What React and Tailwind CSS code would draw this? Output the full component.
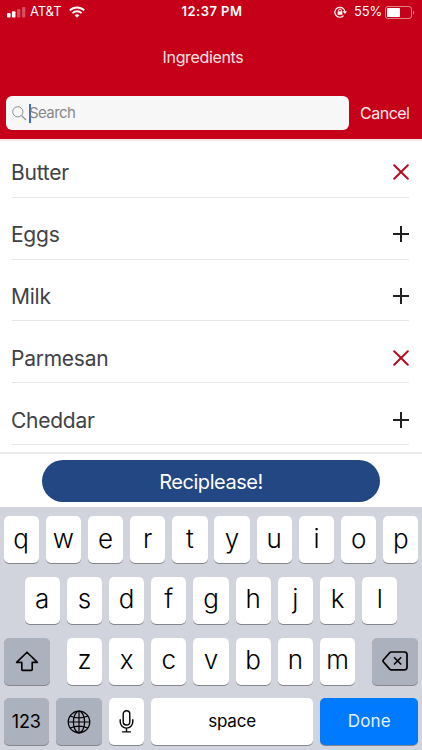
const ingredients = [
  { name: "Butter", selected: true },
  { name: "Eggs", selected: false },
  { name: "Milk", selected: false },
  { name: "Parmesan", selected: true },
  { name: "Cheddar", selected: false },
];

function StatusBar() {
  return (
    <div className="grid h-6 grid-cols-3 items-center pr-[7px] pl-[7px] text-[13px] text-white">
      <div className="flex items-center">
        <svg width="19" height="11" viewBox="0 0 19 11" fill="#fff">
          <rect x="0" y="6" width="3.6" height="4.6" rx="1" />
          <rect x="4.9" y="4.2" width="3.6" height="6.4" rx="1" />
          <rect x="10" y="2" width="3.4" height="8.6" rx="1" opacity="0.3" />
          <rect x="15" y="0" width="3.4" height="10.6" rx="1" opacity="0.3" />
        </svg>
        <span className="ml-[4px] w-[32px] tracking-[-0.1px]">AT&amp;T</span>
        <svg className="ml-[7px]" width="16" height="12" viewBox="0 0 16 12" fill="none" stroke="#fff">
          <path d="M0.8 4.4A10.4 10.4 0 0 1 15.2 4.4" strokeWidth="2" />
          <path d="M3.4 7.1A6.6 6.6 0 0 1 12.6 7.1" strokeWidth="1.9" />
          <path d="M5.6 9.3A3.5 3.5 0 0 1 10.4 9.3L8 11.7Z" fill="#fff" stroke="none" />
        </svg>
      </div>
      <span className="pl-[2px] text-center font-semibold tracking-[0.45px] whitespace-nowrap">12:37 PM</span>
      <div className="flex items-center justify-end">
        <svg width="14" height="12" viewBox="0 0 14 12" fill="none" stroke="#fff">
          <path d="M9.6 9.6A5 5 0 1 1 10.8 5.4" strokeWidth="1.2" />
          <path d="M8.8 5.2H13L10.9 8Z" fill="#fff" stroke="none" />
          <rect x="3.6" y="5.2" width="4.8" height="3.6" rx="0.4" fill="#fff" stroke="none" />
          <path d="M4.6 5.4V4.4a1.4 1.4 0 0 1 2.8 0v1" strokeWidth="0.9" />
        </svg>
        <span className="ml-[6px] w-[28px] tracking-[-0.2px]">55%</span>
        <svg className="ml-[3px]" width="30" height="13" viewBox="0 0 30 13">
          <rect x="0.5" y="0.5" width="26" height="12" rx="2.5" fill="none" stroke="#fff" strokeOpacity="0.5" />
          <rect x="2" y="2" width="13" height="9" rx="0.8" fill="#fff" />
          <path d="M28 4.5c1.6 0.6 1.6 3.4 0 4z" fill="#fff" fillOpacity="0.55" />
        </svg>
      </div>
    </div>
  );
}

function SearchBar() {
  return (
    <div className="flex items-center pl-[6px]">
      <div className="flex h-[34px] w-[343px] items-center rounded-[6px] bg-[#f7f7f7] pl-[6px]">
        <svg width="15" height="15" viewBox="0 0 15 15" fill="none" stroke="#8e8e93">
          <circle cx="5.8" cy="5.8" r="5.1" strokeWidth="1" />
          <path d="M9.6 9.6L14 14" strokeWidth="1.3" />
        </svg>
        <div className="ml-[1.6px] h-[19px] w-[2px] bg-[#3f66d8]" />
        <span className="-ml-[1.6px] text-[15px] tracking-[-0.6px] text-[#88888c]">Search</span>
      </div>
      <span className="ml-[11px] text-[16px] tracking-[-0.5px] text-[#ffe9ec]">Cancel</span>
    </div>
  );
}

function IngredientRow({ name, selected }) {
  return (
    <li className="ml-[12px] mr-[13px] flex h-[61.8px] items-center justify-between border-b border-[#e6e6e8] pt-[12px]">
      <span className="-ml-px pt-[2px] text-[21px] leading-6 tracking-[-0.25px] text-[#414146]">{name}</span>
      {selected ? (
        <svg width="16" height="16" viewBox="0 0 16 16" stroke="#b30f22" strokeWidth="2" strokeLinecap="round">
          <path d="M1.2 1.2L14.8 14.8M14.8 1.2L1.2 14.8" />
        </svg>
      ) : (
        <svg width="16" height="16" viewBox="0 0 16 16" stroke="#202022" strokeWidth="2">
          <path d="M0 8H16M8 0V16" />
        </svg>
      )}
    </li>
  );
}

function LetterKey({ letter }) {
  return (
    <div className="flex h-[47px] w-[35.3px] shrink-0 items-center justify-center rounded-[5px] bg-white pb-[3px] text-[26px] font-light text-black shadow-[0_1px_0_#85878c]">
      {letter}
    </div>
  );
}

function KeyRow({ letters }) {
  return (
    <div className="flex justify-center gap-[6.9px]">
      {letters.split("").map((letter) => (
        <LetterKey key={letter} letter={letter} />
      ))}
    </div>
  );
}

function Keyboard() {
  const darkKey =
    "flex h-[47px] items-center justify-center rounded-[5px] bg-[#abb1bd] text-black shadow-[0_1px_0_#85878c]";

  return (
    <div className="flex h-[243px] flex-col gap-[13.8px] bg-[#d1d4dc] pt-[9px]">
      <KeyRow letters="qwertyuiop" />
      <KeyRow letters="asdfghjkl" />
      <div className="flex justify-between px-[3.7px]">
        <div className={`${darkKey} w-[46.5px]`}>
          <svg width="24" height="21" viewBox="0 0 24 21" fill="none" stroke="#000" strokeWidth="1.6" strokeLinejoin="round">
            <path d="M12 1.2L22.4 11.4H17.2V18.6Q17.2 19.4 16.4 19.4H7.6Q6.8 19.4 6.8 18.6V11.4H1.6Z" />
          </svg>
        </div>
        <KeyRow letters="zxcvbnm" />
        <div className={`${darkKey} w-[46.5px]`}>
          <svg width="26" height="20" viewBox="0 0 26 20" fill="none" stroke="#000" strokeWidth="1.7" strokeLinejoin="round">
            <path d="M9.3 1H22.5Q25 1 25 3.5V16.3Q25 18.8 22.5 18.8H9.3Q8.4 18.8 7.7 18.1L1.5 11Q0.6 9.9 1.5 8.8L7.7 1.7Q8.4 1 9.3 1Z" />
            <path d="M12 6.3L19.2 13.5M19.2 6.3L12 13.5" strokeWidth="1.6" />
          </svg>
        </div>
      </div>
      <div className="flex px-[3.7px]">
        <div className={`${darkKey} w-[45.3px] text-[18px] tracking-[-0.1px]`}>123</div>
        <div className={`${darkKey} ml-[7px] w-[45.6px]`}>
          <svg width="24" height="24" viewBox="0 0 24 24" fill="none" stroke="#000" strokeWidth="1.2">
            <circle cx="12" cy="12" r="10.8" />
            <ellipse cx="12" cy="12" rx="5.6" ry="10.8" />
            <path d="M12 1V23M1 12H23M3.2 6Q12 9.8 20.8 6M3.2 18Q12 14.2 20.8 18" />
          </svg>
        </div>
        <div className="ml-[7px] flex h-[47px] w-[35.3px] items-center justify-center rounded-[5px] bg-white shadow-[0_1px_0_#85878c]">
          <svg width="15" height="23" viewBox="0 0 15 23" fill="none" stroke="#000" strokeWidth="1.4" strokeLinecap="round">
            <rect x="4.2" y="0.8" width="6.6" height="14.2" rx="3.3" />
            <path d="M1.2 9.8V11.8A6.3 6.3 0 0 0 13.8 11.8V9.8M7.5 18.2V21.8M3.6 21.9H11.4" />
          </svg>
        </div>
        <div className="ml-[7px] flex h-[47px] w-[162.3px] items-center justify-center rounded-[5px] bg-white text-[17px] tracking-[-0.2px] text-black shadow-[0_1px_0_#85878c]">
          space
        </div>
        <div className="ml-[7px] flex h-[47px] flex-1 items-center justify-center rounded-[5px] bg-[#007aff] text-[17px] tracking-[0.1px] text-[#e6f1ff] shadow-[0_1px_0_#85878c]">
          Done
        </div>
      </div>
    </div>
  );
}

export default function App() {
  return (
    <div className="flex h-[750px] w-[422px] flex-col overflow-hidden bg-white font-['Inter','Liberation_Sans',sans-serif]">
      <header className="h-[139px] shrink-0 bg-[#c60018]">
        <StatusBar />
        <h1 className="mt-[22px] mb-[28px] pr-[16px] text-center text-[16px] leading-[22px] tracking-[-0.35px] text-[#ffe3e6]">
          Ingredients
        </h1>
        <SearchBar />
      </header>
      <ul className="h-[313px] shrink-0 border-t-2 border-[#f3e9ea]">
        <div className="-mt-[5px]">
          {ingredients.map((item) => (
            <IngredientRow key={item.name} name={item.name} selected={item.selected} />
          ))}
        </div>
      </ul>
      <div className="flex h-[55px] shrink-0 justify-center border-t-2 border-[#ebebed] pt-[6px]">
        <button className="h-[42px] w-[338px] rounded-full bg-[#224782] pt-px text-[20px] tracking-[-0.45px] text-white">
          Reciplease!
        </button>
      </div>
      <Keyboard />
    </div>
  );
}
